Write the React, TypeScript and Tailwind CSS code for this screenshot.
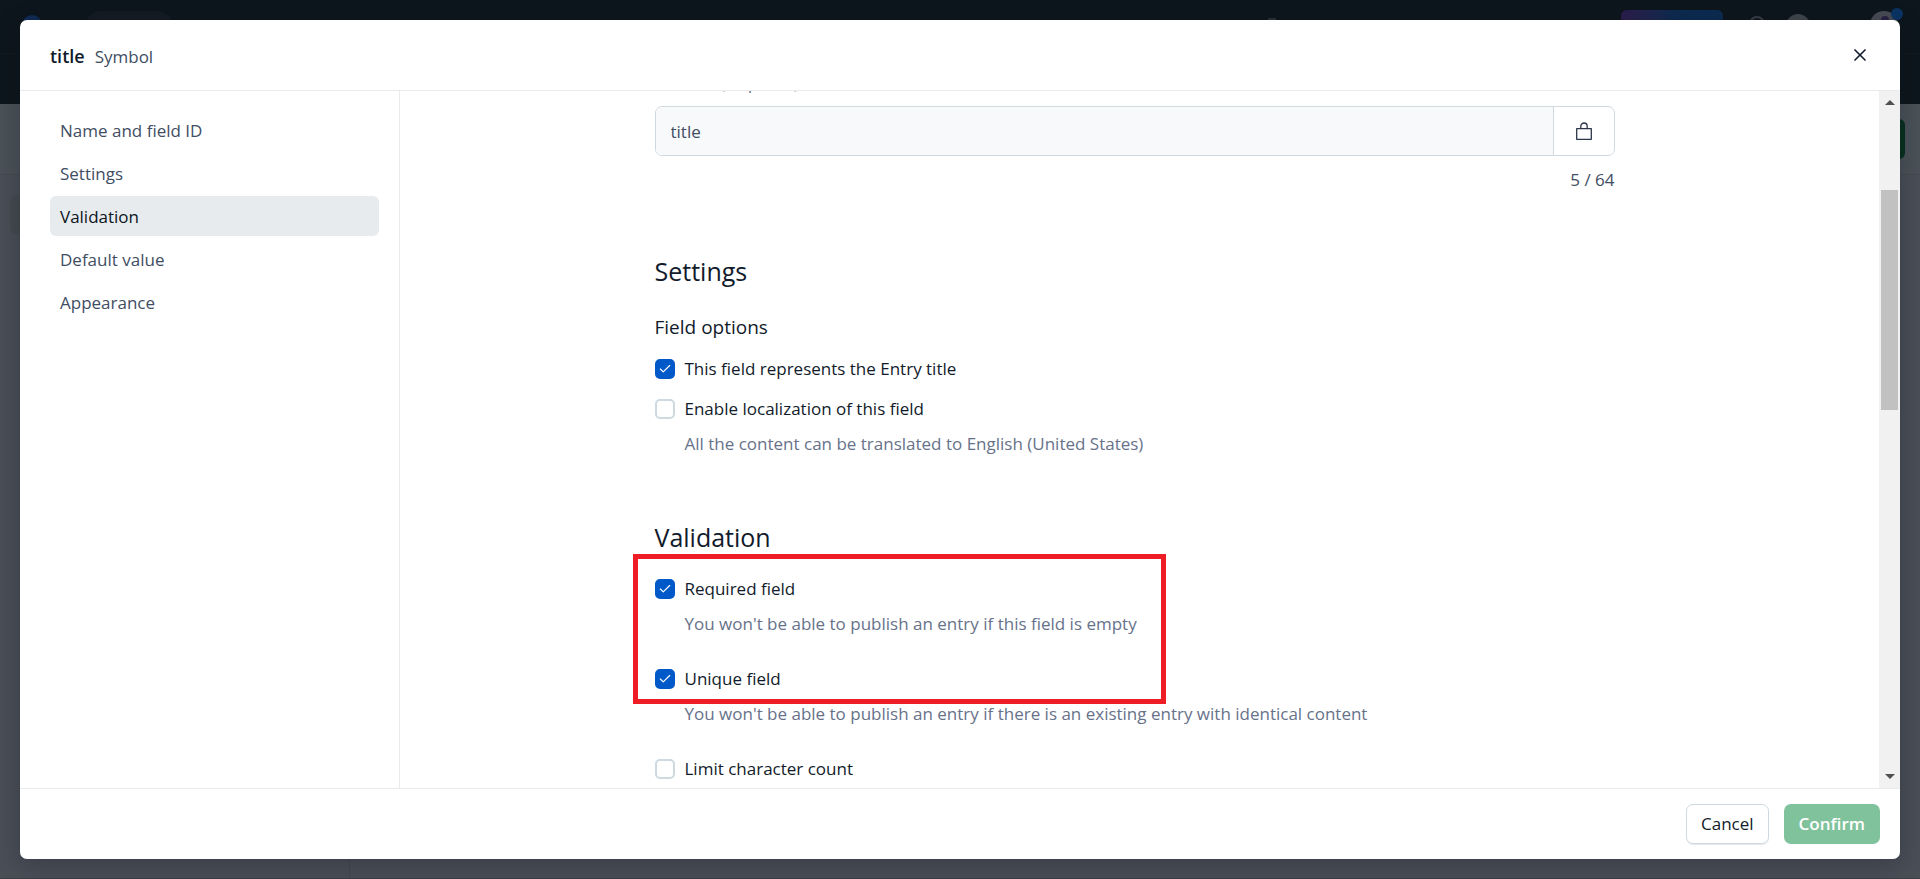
import { useState } from "react";
import { Check, X } from "lucide-react";

const navItems = ["Name and field ID", "Settings", "Validation", "Default value", "Appearance"];

function Backdrop() {
  return (
    <div aria-hidden="true" className="absolute inset-0 flex flex-col bg-[#4a4e57]">
      <div className="flex h-[104px] shrink-0 flex-col bg-[#0e161d]">
        <div className="relative h-[54px] border-b border-[#121a21]">
          <span className="absolute left-[22px] top-[15px] size-5 rounded-full bg-[#0f2a55]" />
          <span className="absolute left-[85px] top-[11px] h-8 w-[88px] rounded-full bg-[#141b24]" />
          <span className="absolute right-[644px] top-[18px] h-1 w-2 bg-[#2a3138]" />
          <span className="absolute right-[197px] top-[10px] h-8 w-[102px] rounded-md bg-linear-to-r from-[#2b1d4c] via-[#0d2a50] to-[#0b2c52]" />
          <span className="absolute right-[155px] top-4 size-4 rounded-full border-2 border-[#383e45]" />
          <span className="absolute right-[110px] top-[14px] size-6 rounded-full bg-[#41464d]" />
          <span className="absolute right-[22px] top-[11px] size-7 rounded-full bg-[#484c54]" />
          <span className="absolute right-[31px] top-4 size-2 rounded-full bg-[#2a2145]" />
          <span className="absolute right-[17px] top-[8px] size-3 rounded-full bg-[#0b3463]" />
        </div>
      </div>
      <div className="flex h-[71px] shrink-0 items-start justify-end border-b border-[#444a51] bg-[#4a5158] pr-[15px] pt-[15px]">
        <span className="h-10 w-24 rounded-md bg-[#07301f]" />
      </div>
      <div className="flex flex-1 border-b border-[#3c4147]">
        <div className="w-[350px] border-r border-[#42474e] px-[10px] pt-5">
          <div className="h-10 rounded-lg bg-[#434a50]" />
        </div>
      </div>
    </div>
  );
}

type OptionProps = { id: string; label: string; help?: string; defaultChecked?: boolean };

function Option({ id, label, help, defaultChecked = false }: OptionProps) {
  return (
    <div className="flex gap-[10px]">
      <span className="grid size-5 shrink-0">
        <input
          id={id}
          type="checkbox"
          defaultChecked={defaultChecked}
          className="peer col-start-1 row-start-1 size-5 appearance-none rounded-[5px] border-2 border-[#cfd9e0] bg-white checked:border-[#0059c8] checked:bg-[#0059c8]"
        />
        <Check
          className="pointer-events-none col-start-1 row-start-1 hidden size-[14px] place-self-center text-white peer-checked:block"
          strokeWidth={2}
        />
      </span>
      <div className="flex flex-col gap-[15px]">
        <label htmlFor={id} className="text-[17px] font-medium leading-5 text-[#111b2b]">
          {label}
        </label>
        {help && <p className="text-[17px] leading-5 text-[#67728a]">{help}</p>}
      </div>
    </div>
  );
}

function LockIcon() {
  return (
    <svg viewBox="0 0 18 18" className="size-[18px]" fill="none" stroke="currentColor" strokeWidth="1.3" strokeLinejoin="round">
      <path d="M1.7 6.7h14.6v10.6H1.7z" />
      <path d="M5.8 6.5V4.2a3.2 3.2 0 0 1 6.4 0v2.3" />
    </svg>
  );
}

function ScrollRail() {
  return (
    <div aria-hidden="true" className="flex w-[21px] shrink-0 flex-col items-center justify-between bg-[#f1f1f1] py-[9px]">
      <svg viewBox="0 0 10 5" className="h-[5px] w-[10px] shrink-0" fill="#505050">
        <path d="M5 0l5 5H0z" />
      </svg>
      <div className="flex w-[17px] flex-1 flex-col py-[7px]">
        <div className="grow-[78]" />
        <div className="grow-[219] bg-[#c1c1c1]" />
        <div className="grow-[356]" />
      </div>
      <svg viewBox="0 0 10 5" className="h-[5px] w-[10px] shrink-0" fill="#505050">
        <path d="M0 0h10L5 5z" />
      </svg>
    </div>
  );
}

export default function App() {
  const [active, setActive] = useState("Validation");
  return (
    <div className="relative h-screen overflow-hidden p-5 font-['Open_Sans',sans-serif] text-[17px] text-[#111b2b]">
      <Backdrop />
      <div
        role="dialog"
        aria-labelledby="dialog-title"
        className="relative flex h-full flex-col overflow-hidden rounded-[7px] bg-white shadow-[0_5px_25px_rgba(12,20,28,0.3)]"
      >
        <header className="flex h-[71px] shrink-0 items-center justify-between border-b border-[#e7ebee] px-[30px]">
          <h2 id="dialog-title" className="flex items-baseline gap-[10px] pt-[2px] text-[18px] font-semibold">
            title <span className="text-[17px] font-normal text-[#414d63]">Symbol</span>
          </h2>
          <button type="button" aria-label="Close" className="flex size-5 items-center justify-center">
            <X className="size-5" strokeWidth={2} />
          </button>
        </header>
        <div className="flex min-h-0 flex-1">
          <nav className="flex w-[380px] shrink-0 flex-col gap-[3px] border-r border-[#e7ebee] pl-[30px] pr-5 pt-[19px]">
            {navItems.map((item) => (
              <button
                key={item}
                type="button"
                onClick={() => setActive(item)}
                className={
                  item === active
                    ? "h-10 rounded-md bg-[#e7ebee] px-[10px] pt-[2px] text-left font-medium text-[#0c141c]"
                    : "h-10 rounded-md px-[10px] pt-[2px] text-left text-[#414d63]"
                }
              >
                {item}
              </button>
            ))}
          </nav>
          <main className="flex min-w-0 flex-1 justify-center overflow-hidden pr-[10px]">
            <div className="-mt-[18px] w-full max-w-[960px]">
              <label htmlFor="field-id" className="flex h-5 gap-[7px] font-medium leading-5">
                Field ID <span className="font-normal text-[#67728a]">(required)</span>
              </label>
              <div className="mt-[13px] flex h-[50px] rounded-[7px] border border-[#cfd9e0]">
                <input
                  id="field-id"
                  readOnly
                  value="title"
                  className="min-w-0 flex-1 rounded-l-md bg-[#f7f9fa] px-[15px] pt-[2px] text-[#414d63] outline-none"
                />
                <button type="button" aria-label="Unlock field ID" className="flex w-[61px] items-center justify-center border-l border-[#cfd9e0] text-[#2b3648]">
                  <LockIcon />
                </button>
              </div>
              <p className="mt-[14px] text-right leading-5 text-[#414d63]">5 / 64</p>
              <h3 className="mt-[65px] text-[25px] font-medium leading-[32px]">Settings</h3>
              <h4 className="mt-[25px] text-[19px] font-medium leading-[30px]">Field options</h4>
              <div className="mt-[17px] flex flex-col gap-5">
                <Option id="entry-title" label="This field represents the Entry title" defaultChecked />
                <Option
                  id="localization"
                  label="Enable localization of this field"
                  help="All the content can be translated to English (United States)"
                />
              </div>
              <h3 className="mt-[67px] text-[25px] font-medium leading-[32px]">Validation</h3>
              <div className="relative mt-[26px] flex flex-col gap-[35px]">
                <Option id="required" label="Required field" help="You won't be able to publish an entry if this field is empty" defaultChecked />
                <Option
                  id="unique"
                  label="Unique field"
                  help="You won't be able to publish an entry if there is an existing entry with identical content"
                  defaultChecked
                />
                <Option id="limit" label="Limit character count" />
                <div className="pointer-events-none absolute -left-[22px] -top-[25px] h-[150px] w-[533px] border-[5px] border-[#ee1c25]" />
              </div>
            </div>
          </main>
          <ScrollRail />
        </div>
        <footer className="flex h-[71px] shrink-0 items-center justify-end gap-[15px] border-t border-[#e7ebee] pr-5">
          <button type="button" className="h-10 rounded-[7px] border border-[#cfd9e0] px-[14px] font-medium shadow-[0_1px_0_rgba(25,37,50,0.1)]">
            Cancel
          </button>
          <button type="button" className="h-10 rounded-[7px] bg-[#80c29c] px-[15px] font-semibold text-white">
            Confirm
          </button>
        </footer>
      </div>
    </div>
  );
}
